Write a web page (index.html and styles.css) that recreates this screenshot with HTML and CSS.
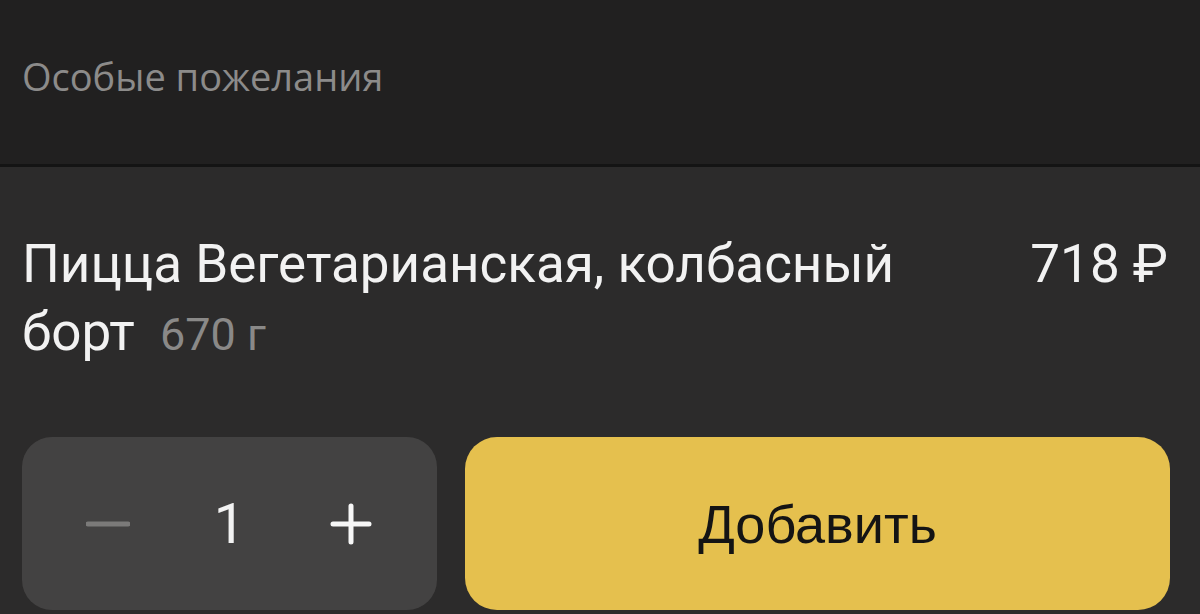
FILE: index.html
```html
<!DOCTYPE html>
<html lang="ru">
<head>
    <meta charset="UTF-8">
    <meta name="viewport" content="width=device-width, initial-scale=1.0">
    <title>Пицца Вегетарианская</title>
    <link rel="stylesheet" href="styles.css">
</head>
<body>
    <div class="wishes">
        <span class="wishes-label">Особые пожелания</span>
    </div>
    <div class="product">
        <div class="product-head">
            <div class="product-name">
                Пицца Вегетарианская, колбасный борт <span class="weight">670 г</span>
            </div>
            <div class="price">718 ₽</div>
        </div>
        <div class="actions">
            <div class="stepper">
                <button class="step minus" aria-label="Меньше">
                    <svg width="44" height="10" viewBox="0 0 44 10"><path d="M2 5H42" stroke="currentColor" stroke-width="5" stroke-linecap="round"/></svg>
                </button>
                <span class="count">1</span>
                <button class="step plus" aria-label="Больше">
                    <svg width="42" height="42" viewBox="0 0 42 42"><path d="M3 21H39M21 3V39" stroke="currentColor" stroke-width="5" stroke-linecap="round"/></svg>
                </button>
            </div>
            <button class="add">Добавить</button>
        </div>
    </div>
</body>
</html>
```

FILE: styles.css
```css
body {
    margin: 0;
    padding: 0;
    width: 1200px;
    height: 614px;
    overflow: hidden;
    background-color: #2c2b2b;
    font-family: Roboto, "Noto Sans", sans-serif;
}
.wishes {
    height: 167px;
    background-color: #212020;
    border-bottom: 3px solid #141414;
    display: flex;
    align-items: center;
    padding-left: 22px;
    box-sizing: border-box;
}
.wishes-label {
    color: #8c8b8a;
    font-family: "Open Sans", sans-serif;
    font-size: 38px;
    margin-top: -12px;
}
.product {
    padding: 63px 32px 0 22px;
}
.product-head {
    display: flex;
    justify-content: space-between;
    align-items: flex-start;
}
.product-name {
    color: #f2f2f2;
    font-size: 53px;
    line-height: 68px;
    width: 900px;
}
.weight {
    color: #8a8988;
    font-size: 45px;
    line-height: 1;
    margin-left: 12px;
}
.price {
    color: #f2f2f2;
    font-size: 53px;
    line-height: 68px;
}
.actions {
    display: flex;
    gap: 28px;
    margin-top: 71px;
    margin-right: -2px;
}
.stepper {
    width: 415px;
    height: 173px;
    background-color: #434242;
    border-radius: 30px;
    display: flex;
    align-items: center;
    justify-content: space-between;
    padding: 0 64px 0 64px;
    box-sizing: border-box;
}
.step {
    background: none;
    border: none;
    padding: 0;
    width: 44px;
    height: 44px;
    display: flex;
    align-items: center;
    justify-content: center;
    cursor: pointer;
}
.minus {
    color: #7b7a79;
}
.plus {
    color: #f7f7f7;
}
.count {
    color: #f2f2f2;
    font-size: 56px;
}
.add {
    flex: 1;
    height: 173px;
    border: none;
    border-radius: 32px;
    background-color: #e5c04e;
    color: #141414;
    font-family: "Liberation Sans", Arial, sans-serif;
    font-size: 54px;
    cursor: pointer;
}
```
